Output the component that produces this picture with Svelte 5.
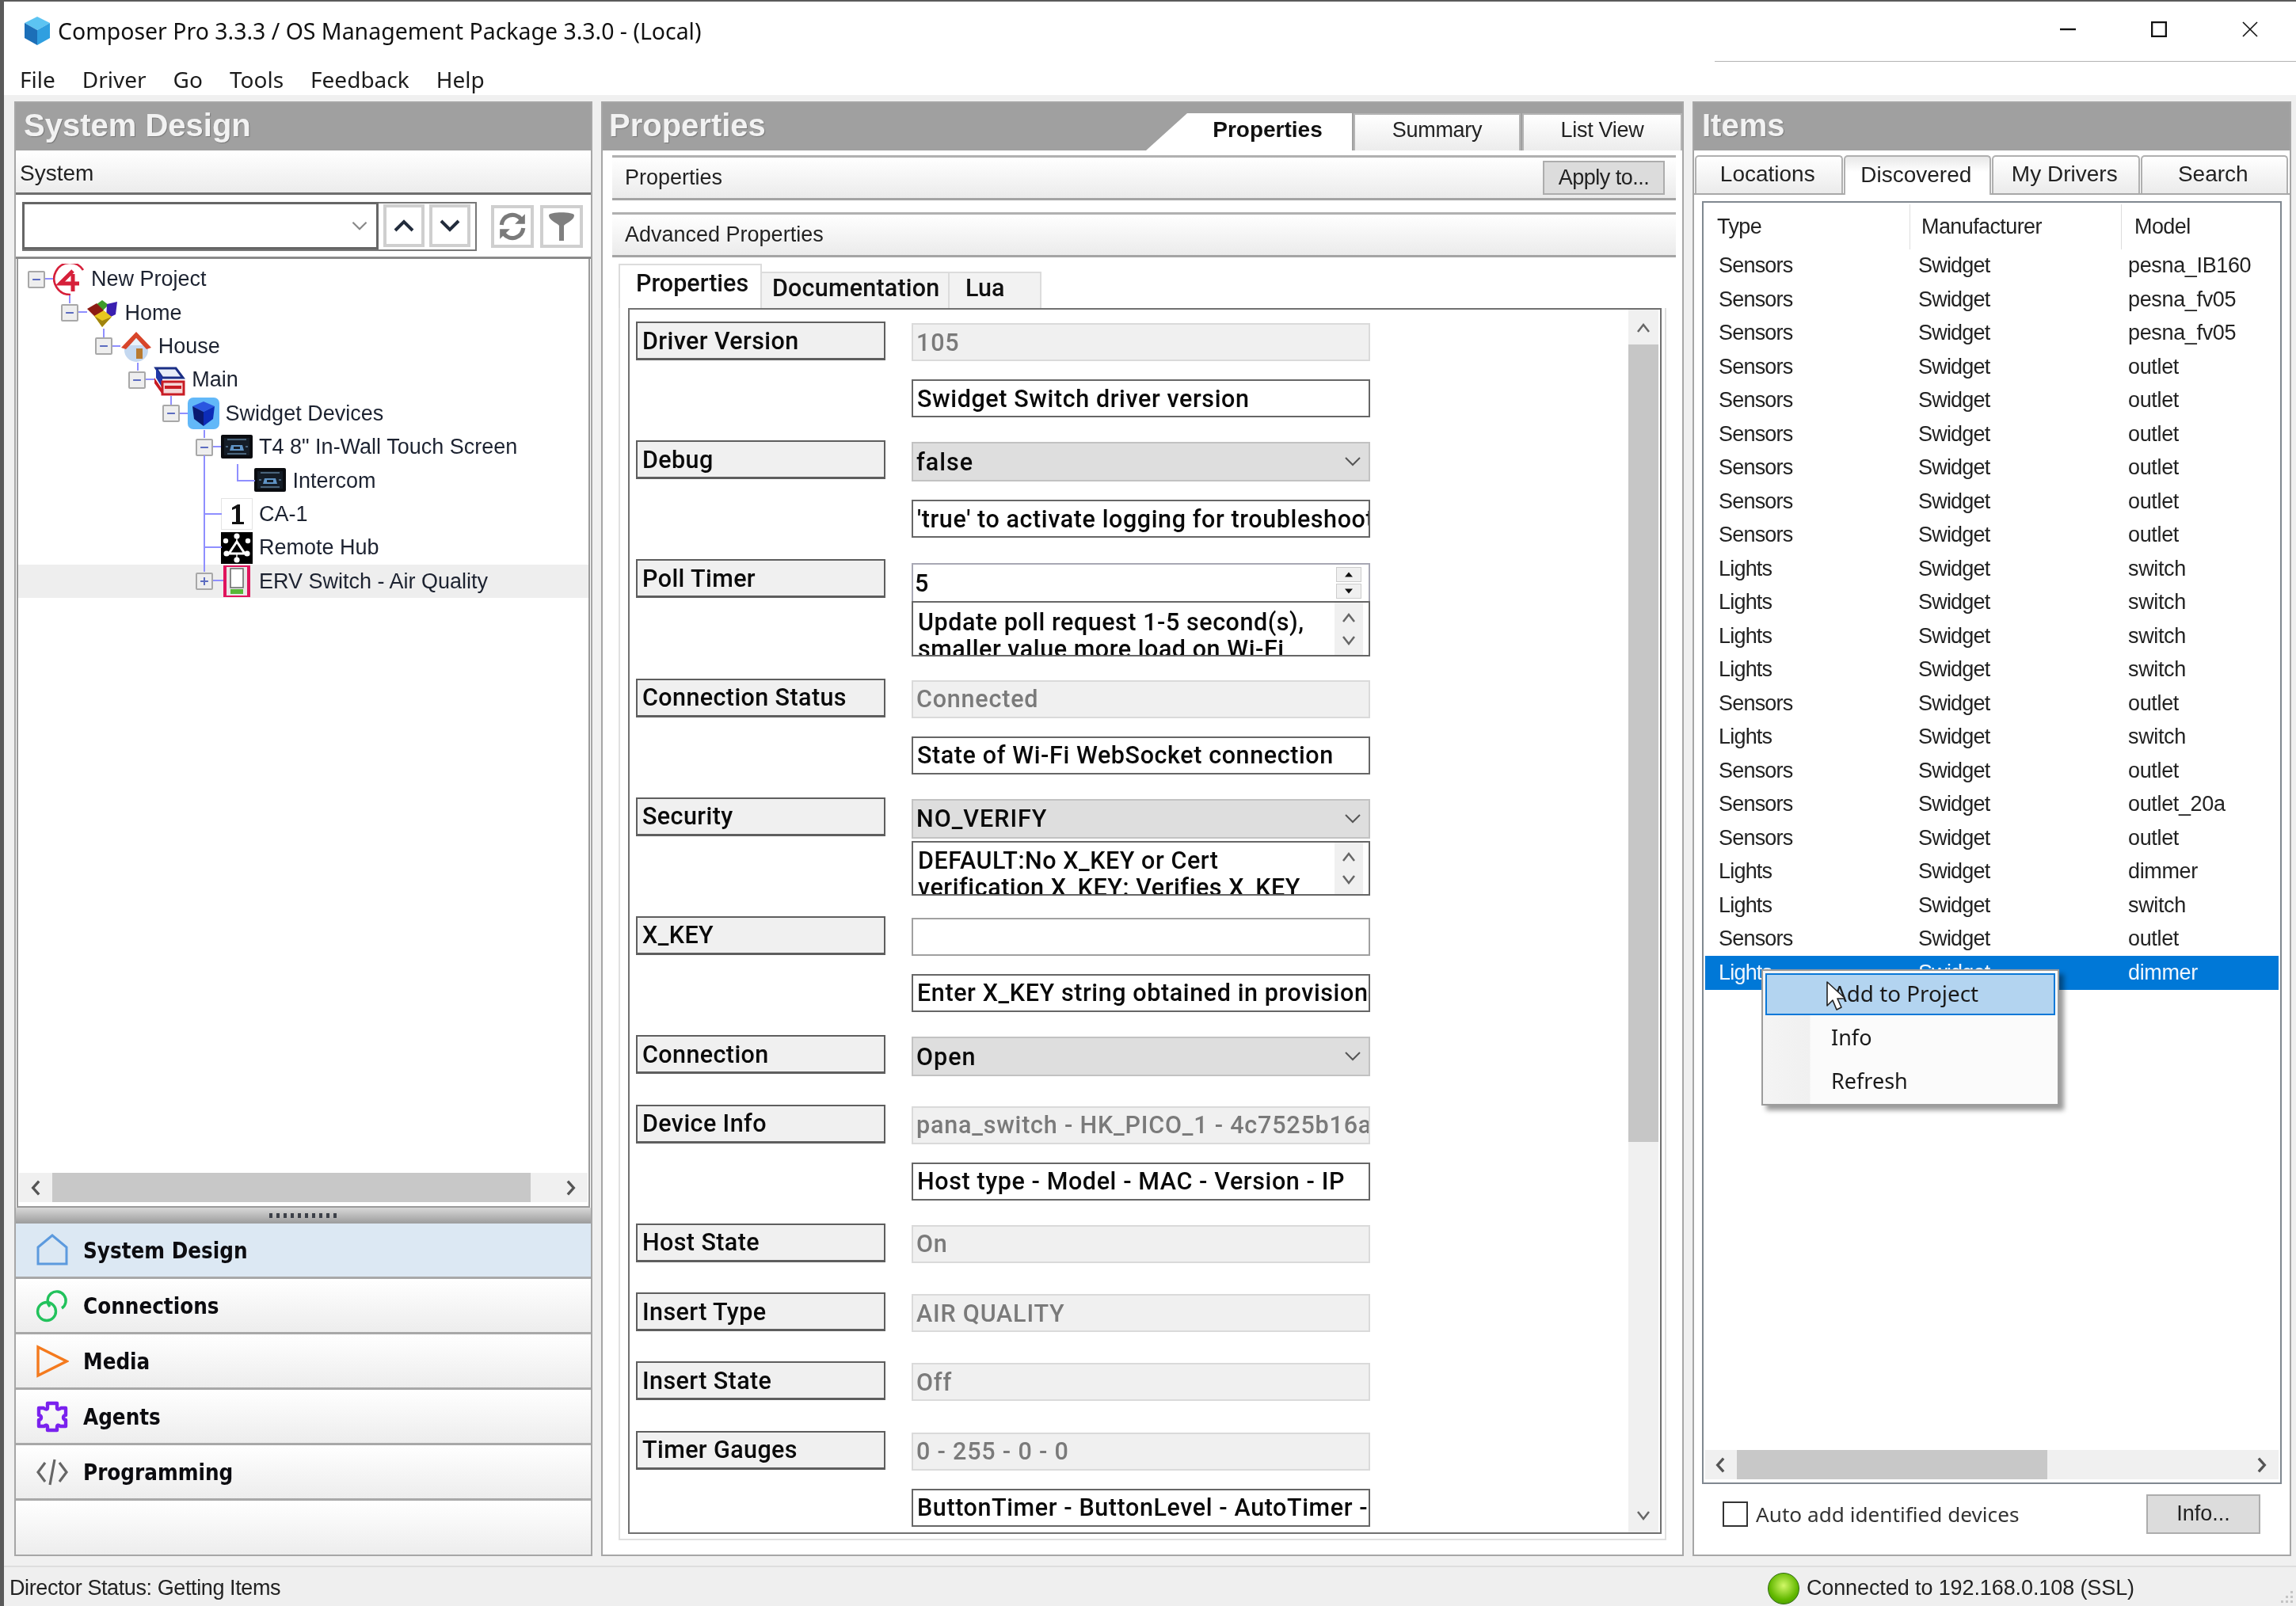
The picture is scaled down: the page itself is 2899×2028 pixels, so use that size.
<script lang="ts">
	const treeRows = [
		{ label: 'New Project', level: 0, box: '-', icon: 'c4' },
		{ label: 'Home', level: 1, box: '-', icon: 'home' },
		{ label: 'House', level: 2, box: '-', icon: 'house' },
		{ label: 'Main', level: 3, box: '-', icon: 'room' },
		{ label: 'Swidget Devices', level: 4, box: '-', icon: 'swidget' },
		{ label: 'T4 8" In-Wall Touch Screen', level: 5, box: '-', icon: 't4' },
		{ label: 'Intercom', level: 6, box: '', icon: 't4' },
		{ label: 'CA-1', level: 5, box: '', icon: 'ca1' },
		{ label: 'Remote Hub', level: 5, box: '', icon: 'hub' },
		{ label: 'ERV Switch - Air Quality', level: 5, box: '+', icon: 'erv', hover: true }
	];

	const treeLines = [
		'M57 25H67',
		'M88 46V56M99 67H110',
		'M131 88V99M142 110H152',
		'M174 131V141M184 152H195',
		'M216 173V184M227 195H237',
		'M258 216V226M269 237H279',
		'M300 259V280H322',
		'M258 248V395M258 322H280M258 364H280M269 406H282'
	];

	const fields = [
		{ label: 'Driver Version', kind: 'off', value: '105', desc: 'Swidget Switch driver version' },
		{ label: 'Debug', kind: 'select', value: 'false', desc: "'true' to activate logging for troubleshooting" },
		{ label: 'Poll Timer', kind: 'spin', value: '5', memo: ['Update poll request  1-5 second(s),', 'smaller value more load on Wi-Fi'] },
		{ label: 'Connection Status', kind: 'off', value: 'Connected', desc: 'State of Wi-Fi WebSocket connection' },
		{ label: 'Security', kind: 'select', value: 'NO_VERIFY', memo: ['DEFAULT:No X_KEY or Cert', 'verification  X_KEY: Verifies X_KEY'] },
		{ label: 'X_KEY', kind: 'text', value: '', desc: 'Enter X_KEY string obtained in provisioning' },
		{ label: 'Connection', kind: 'select', value: 'Open' },
		{ label: 'Device Info', kind: 'off', value: 'pana_switch - HK_PICO_1 - 4c7525b16a', desc: 'Host type - Model - MAC - Version - IP' },
		{ label: 'Host State', kind: 'off', value: 'On' },
		{ label: 'Insert Type', kind: 'off', value: 'AIR QUALITY' },
		{ label: 'Insert State', kind: 'off', value: 'Off' },
		{ label: 'Timer Gauges', kind: 'off', value: '0 - 255 - 0 - 0', desc: 'ButtonTimer - ButtonLevel - AutoTimer - AutoLevel' }
	];

	const items = [
		['Sensors', 'pesna_IB160'],
		['Sensors', 'pesna_fv05'],
		['Sensors', 'pesna_fv05'],
		['Sensors', 'outlet'],
		['Sensors', 'outlet'],
		['Sensors', 'outlet'],
		['Sensors', 'outlet'],
		['Sensors', 'outlet'],
		['Sensors', 'outlet'],
		['Lights', 'switch'],
		['Lights', 'switch'],
		['Lights', 'switch'],
		['Lights', 'switch'],
		['Sensors', 'outlet'],
		['Lights', 'switch'],
		['Sensors', 'outlet'],
		['Sensors', 'outlet_20a'],
		['Sensors', 'outlet'],
		['Lights', 'dimmer'],
		['Lights', 'switch'],
		['Sensors', 'outlet'],
		['Lights', 'dimmer']
	];

	const navItems = ['System Design', 'Connections', 'Media', 'Agents', 'Programming'];
</script>

<div class="window">
	<header class="titlebar">
		<svg class="app-icon" viewBox="0 0 34 38">
			<path d="M17 1 33 9 17 18 1 9Z" fill="#5cc4f2" />
			<path d="M1 9 17 18V37L1 28Z" fill="#1c6fb8" />
			<path d="M33 9 17 18V37L33 28Z" fill="#2f9fe0" />
		</svg>
		<span class="title">Composer Pro 3.3.3 / OS Management Package 3.3.0 - (Local)</span>
		<div class="win-controls">
			<svg viewBox="0 0 20 20"><path d="M0 10H20" stroke-width="2.4" /></svg>
			<svg viewBox="0 0 20 20"><path d="M1 1H19V19H1Z" stroke-width="2.6" /></svg>
			<svg viewBox="0 0 20 20"><path d="M1 1 19 19M19 1 1 19" stroke-width="1.6" /></svg>
		</div>
	</header>

	<nav class="menubar">
		<span>File</span><span>Driver</span><span>Go</span><span>Tools</span><span>Feedback</span><span>Help</span>
	</nav>

	<main class="main">
		<section class="panel left">
			<h2 class="panel-head">System Design</h2>
			<div class="sys-bar">System</div>
			<div class="sys-tools">
				<div class="combo-group">
					<div class="combo">
						<svg viewBox="0 0 24 14"><path d="M2 2 12 12 22 2" /></svg>
					</div>
					<button class="tool-btn" aria-label="Up">
						<svg viewBox="0 0 26 16"><path d="M2 14 13 3 24 14" /></svg>
					</button>
					<button class="tool-btn" aria-label="Down">
						<svg viewBox="0 0 26 16"><path d="M2 2 13 13 24 2" /></svg>
					</button>
				</div>
				<button class="tool-btn solo" aria-label="Refresh">
					<svg class="refresh" viewBox="0 0 36 36">
						<path d="M5 16A13 13 0 0 1 28 9" />
						<path d="M31 20A13 13 0 0 1 8 27" />
						<path class="solid" d="M33 3V15H21ZM3 33V21H15Z" />
					</svg>
				</button>
				<button class="tool-btn solo" aria-label="Filter">
					<svg class="funnel" viewBox="0 0 36 38">
						<path d="M2 5C2 0 34 0 34 5 34 11 23 15 21 18V37H15V18C13 15 2 11 2 5Z" />
					</svg>
				</button>
			</div>
			<div class="tree">
				<div class="tree-rows">
					{#each treeRows as row}
						<div class="tree-row" class:hover={row.hover} style="padding-left: {12 + row.level * 42.4}px">
							<span class="expander">
								{#if row.box}
									<i class="expander-box">
										<svg viewBox="0 0 22 22">
											<path d={row.box === '+' ? 'M5 11H17M11 5V17' : 'M5 11H17'} />
										</svg>
									</i>
								{/if}
							</span>
							<svg class="node-icon" viewBox="0 0 40 40">
								{#if row.icon === 'c4'}
									<path d="M38 8A20 20 0 1 0 22 39" fill="none" stroke="#d6203a" stroke-width="2.6" />
									<path d="M25 9 9 25H33M25 13V35" fill="none" stroke="#d6203a" stroke-width="5" />
								{:else if row.icon === 'home'}
									<path d="M12 10 20 4 28 10 20 18Z" fill="#3e9c2a" />
									<path d="M26 9 39 6 37 22 25 28Z" fill="#3a1fb0" />
									<path d="M1 15 13 8 22 17 12 26Z" fill="#8c1c14" />
									<path d="M10 24 22 17 32 25 20 38Z" fill="#e8c820" />
									<path d="M10 24 20 30 32 25 20 38Z" fill="#a08410" />
								{:else if row.icon === 'house'}
									<circle cx="20" cy="25" r="15" fill="#c4d8f0" />
									<path d="M1 22 20 2 39 22 33 24 20 10 7 24Z" fill="#d8452a" />
									<path d="M12 19 20 10 28 19Z" fill="#eaf2fb" />
									<path d="M20 23H28V36H20Z" fill="#b87a30" />
								{:else if row.icon === 'room'}
									<path d="M3 5H28L37 17H11Z" fill="#e8eef8" stroke="#1b2f86" stroke-width="3" />
									<path d="M3 5V17L11 30V17" fill="#2038a8" />
									<path d="M11 22H38V38H11Z" fill="#f4d8d8" stroke="#c81c24" stroke-width="3" />
									<path d="M1 17 11 32V38L1 24Z" fill="#c81c24" />
									<path d="M14 27H35V31H14Z" fill="#c81c24" />
								{:else if row.icon === 'swidget'}
									<rect width="40" height="40" rx="7" fill="#62b8f8" />
									<path d="M20 5 34 11 20 18 6 11Z" fill="#2a56e0" />
									<path d="M6 11 20 18V36L8 27Z" fill="#0a1a70" />
									<path d="M34 11 20 18V36L32 27Z" fill="#0c2cb8" />
								{:else if row.icon === 't4'}
									<rect y="4" width="40" height="30" rx="2" fill="#0a0c10" />
									<rect x="4" y="8" width="32" height="22" fill="#141c26" />
									<path d="M13 17H27L29 24H11Z" fill="#5f93c4" />
									<path d="M16 19H24V22H16Z" fill="#141c26" />
									<path d="M6 19H9M31 19H34M8 10H32M8 28H32" stroke="#5c7c98" stroke-width="1.5" />
								{:else if row.icon === 'ca1'}
									<rect x=".5" y=".5" width="39" height="39" fill="#fff" stroke="#e4e4e4" />
									<path d="M14 12 21 8H24V30H29V33H14V30H19V13L14 15Z" fill="#111" />
								{:else if row.icon === 'hub'}
									<rect width="40" height="40" fill="#000" />
									<path d="M20 12 10 27H30Z" fill="none" stroke="#fff" stroke-width="3" />
									<path d="M20 4V12M7 26 10 27M33 26 30 27M20 34V27" stroke="#fff" stroke-width="1.4" />
									<circle cx="20" cy="5" r="3.6" fill="#fff" />
									<circle cx="6" cy="11" r="3.2" fill="#fff" />
									<circle cx="34" cy="11" r="3.2" fill="#fff" />
									<circle cx="7" cy="27" r="3.6" fill="#fff" />
									<circle cx="33" cy="27" r="3.6" fill="#fff" />
									<circle cx="20" cy="35" r="3.6" fill="#fff" />
								{:else}
									<rect x="3" y="0" width="34" height="40" fill="#e0145c" />
									<rect x="7" y="2" width="26" height="36" fill="#e8e8e8" />
									<rect x="12" y="4" width="16" height="24" fill="#fff" stroke="#666" stroke-width="1.5" />
									<rect x="12" y="30" width="16" height="6" fill="#58b838" />
								{/if}
							</svg>
							<span class="node-label">{row.label}</span>
						</div>
					{/each}
				</div>
				<div class="hscroll left-scroll">
					<svg viewBox="0 0 14 24"><path d="M12 2 3 12 12 22" /></svg>
					<div class="hscroll-track"><div class="hscroll-thumb"></div></div>
					<svg viewBox="0 0 14 24"><path d="M2 2 11 12 2 22" /></svg>
				</div>
				<svg class="tree-lines" viewBox="0 0 740 500" aria-hidden="true">
					{#each treeLines as d}
						<path {d} />
					{/each}
				</svg>
			</div>
			<div class="splitter"><span></span></div>
			<div class="nav-list">
				{#each navItems as name, i}
					<div class="nav-item" class:active={i === 0}>
						<svg class="nav-icon" viewBox="0 0 42 42">
							{#if i === 0}
								<path d="M3 17 21 2 39 17V38H3Z" fill="none" stroke="#5c9ade" stroke-width="3" />
							{:else if i === 1}
								<circle cx="14" cy="28" r="11.5" fill="none" stroke="#22c25c" stroke-width="3.4" />
								<path d="M18 22A11.5 11.5 0 1 1 33 24" fill="none" stroke="#22c25c" stroke-width="3.4" />
							{:else if i === 2}
								<path d="M3 3 39 21 3 39Z" fill="none" stroke="#f47a1e" stroke-width="3.4" />
							{:else if i === 3}
								<path d="M15 4H27V10C27 12 30 12 32 10H38V19C34 19 34 25 38 25V33H31C29 31 27 31 27 34V38H15V34C15 31 12 31 11 33H4V25C8 25 8 19 4 19V10H10C12 12 15 12 15 10Z" fill="none" stroke="#7a22ee" stroke-width="4.4" stroke-linejoin="round" />
							{:else}
								<path d="M12 9 3 21 12 33M30 9 39 21 30 33M24 5 18 37" fill="none" stroke="#666" stroke-width="3.2" />
							{/if}
						</svg>
						<span>{name}</span>
					</div>
				{/each}
				<div class="nav-item empty"></div>
			</div>
		</section>

		<section class="panel center">
			<div class="center-head">
				<h2 class="panel-head plain">Properties</h2>
				<div class="view-tabs">
					<div class="view-tab active">Properties</div>
					<div class="view-tab">Summary</div>
					<div class="view-tab">List View</div>
				</div>
			</div>
			<div class="bar first">
				<span>Properties</span>
				<button class="apply">Apply to...</button>
			</div>
			<div class="bar">
				<span>Advanced Properties</span>
			</div>
			<div class="sub-tabs">
				<div class="sub-tab active">Properties</div>
				<div class="sub-tab doc">Documentation</div>
				<div class="sub-tab lua">Lua</div>
			</div>
			<div class="tab-body">
				<div class="prop-frame">
					<div class="prop-scroll">
						{#each fields as f}
							<div class="prop-row" class:short={!f.desc && !f.memo}>
								<div class="prop-label">{f.label}</div>
								<div class="prop-col">
									{#if f.kind === 'select'}
										<div class="ctl select">
											{f.value}
											<svg viewBox="0 0 20 12"><path d="M1 1 10 10 19 1" /></svg>
										</div>
									{:else if f.kind === 'spin'}
										<div class="ctl spin">
											{f.value}
											<div class="spin-btns">
												<i><svg viewBox="0 0 10 6"><path d="M5 0 10 6H0Z" /></svg></i>
												<i><svg viewBox="0 0 10 6"><path d="M5 6 10 0H0Z" /></svg></i>
											</div>
										</div>
									{:else}
										<div class="ctl" class:off={f.kind === 'off'}>{f.value}</div>
									{/if}
									{#if f.desc}
										<div class="ctl desc">{f.desc}</div>
									{/if}
									{#if f.memo}
										<div class="memo">
											<div class="memo-text">
												{#each f.memo as line}<div>{line}</div>{/each}
											</div>
											<div class="memo-arrows">
												<svg viewBox="0 0 18 14"><path d="M2 12 9 3 16 12" /></svg>
												<svg viewBox="0 0 18 14"><path d="M2 2 9 11 16 2" /></svg>
											</div>
										</div>
									{/if}
								</div>
							</div>
						{/each}
					</div>
					<div class="vscroll">
						<svg viewBox="0 0 18 14"><path d="M2 12 9 3 16 12" /></svg>
						<div class="vscroll-track"><div class="vscroll-thumb"></div></div>
						<svg viewBox="0 0 18 14"><path d="M2 2 9 11 16 2" /></svg>
					</div>
				</div>
			</div>
		</section>

		<section class="panel right">
			<h2 class="panel-head">Items</h2>
			<div class="item-tabs">
				<div class="item-tab">Locations</div>
				<div class="item-tab active">Discovered</div>
				<div class="item-tab">My Drivers</div>
				<div class="item-tab">Search</div>
			</div>
			<div class="list-frame">
				<div class="list-head">
					<span>Type</span>
					<span>Manufacturer</span>
					<span>Model</span>
				</div>
				<div class="list-rows">
					{#each items as item, i}
						<div class="list-row" class:selected={i === items.length - 1}>
							<span>{item[0]}</span>
							<span>Swidget</span>
							<span class="model">{item[1]}</span>
						</div>
					{/each}
				</div>
				<div class="hscroll list-scroll">
					<svg viewBox="0 0 14 24"><path d="M12 2 3 12 12 22" /></svg>
					<div class="hscroll-track"><div class="hscroll-thumb"></div></div>
					<svg viewBox="0 0 14 24"><path d="M2 2 11 12 2 22" /></svg>
				</div>
				<div class="context-menu">
					<div class="menu-item hot">Add to Project</div>
					<div class="menu-item">Info</div>
					<div class="menu-item">Refresh</div>
					<svg class="cursor" viewBox="0 0 24 38">
						<path d="M1 1V31L8 24 13 36 19 33 14 22H24Z" fill="#fff" stroke="#222" stroke-width="1.6" stroke-linejoin="round" />
					</svg>
				</div>
			</div>
			<div class="list-foot">
				<label class="auto-add"><i class="check"></i>Auto add identified devices</label>
				<button class="info-btn">Info...</button>
			</div>
		</section>
	</main>

	<footer class="statusbar">
		<span class="director">Director Status: Getting Items</span>
		<div class="connection">
			<i class="led"></i>
			<span>Connected to 192.168.0.108 (SSL)</span>
		</div>
		<svg class="grip" viewBox="0 0 20 20">
			<path d="M15 3h3v3h-3zM9 9h3v3H9zM15 9h3v3h-3zM3 15h3v3H3zM9 15h3v3H9zM15 15h3v3h-3z" />
		</svg>
	</footer>
</div>

<style>
	:global(body) {
		margin: 0;
		background: #f0f0f0;
	}

	.window {
		box-sizing: border-box;
		width: 2899px;
		height: 2028px;
		display: flex;
		flex-direction: column;
		overflow: hidden;
		background: #f0f0f0;
		border-top: 2px solid #5a5a5a;
		border-left: 5px solid #5a5a5a;
		font-family: 'Liberation Sans', Arial, sans-serif;
		color: #111;
		filter: blur(0.55px);
	}

	button {
		font-family: inherit;
		padding: 0;
	}

	svg {
		display: block;
		flex: none;
	}

	/* title + menu */
	.titlebar {
		position: relative;
		height: 74px;
		flex: none;
		display: flex;
		align-items: center;
		background: #fff;
		padding-left: 25px;
	}

	.titlebar::after {
		content: '';
		position: absolute;
		left: 2160px;
		right: 0;
		bottom: -2px;
		height: 1px;
		background: #b4b4b4;
	}

	.app-icon {
		width: 34px;
		height: 38px;
	}

	.title {
		margin-left: 9px;
		font-family: 'Noto Sans', sans-serif;
		font-size: 28.45px;
		color: #111;
	}

	.win-controls {
		margin-left: auto;
		display: flex;
		gap: 95px;
		padding-right: 48px;
		margin-bottom: 4px;
	}

	.win-controls svg {
		width: 20px;
		height: 20px;
		fill: none;
		stroke: #111;
	}

	.menubar {
		height: 44px;
		flex: none;
		display: flex;
		align-items: center;
		gap: 34px;
		padding: 4px 0 0 20px;
		box-sizing: border-box;
		background: #fff;
		font-family: 'Noto Sans', sans-serif;
		font-size: 28px;
		color: #1c1c1c;
	}

	/* panels */
	.main {
		flex: 1;
		min-height: 0;
		display: flex;
		gap: 11px;
		padding: 8px 6px 12px 13px;
	}

	.panel {
		box-sizing: border-box;
		display: flex;
		flex-direction: column;
		background: #fff;
		border: 2px solid #a6a6a6;
	}

	.panel.left {
		width: 730px;
	}

	.panel.center {
		width: 1367px;
	}

	.panel.right {
		flex: 1;
	}

	.panel-head {
		margin: 0;
		height: 60px;
		flex: none;
		display: flex;
		align-items: center;
		padding: 0 0 3px 10px;
		box-sizing: border-box;
		background: #a0a0a0;
		color: #f2f2f2;
		font-size: 40px;
		font-weight: 700;
		text-shadow: 1px 1px 1px #777;
	}

	/* system design */
	.sys-bar {
		box-sizing: border-box;
		height: 56px;
		flex: none;
		display: flex;
		align-items: center;
		padding: 4px 0 0 5px;
		font-size: 28px;
		color: #222;
		background: linear-gradient(#fff, #ececec);
		border-bottom: 3px solid #6e6e6e;
	}

	.sys-tools {
		box-sizing: border-box;
		height: 81px;
		flex: none;
		display: flex;
		align-items: center;
		gap: 8px;
		padding: 2px 0 0 8px;
		border-bottom: 3px solid #8a8a8a;
		background: #fff;
	}

	.combo-group {
		display: flex;
		align-items: center;
		gap: 6px;
		padding-right: 6px;
		margin-right: 10px;
		border: 2px solid #777;
		border-left: 0;
		border-top: 0;
		box-shadow: inset 0 2px 0 #777;
		height: 60px;
	}

	.combo {
		box-sizing: border-box;
		width: 450px;
		height: 60px;
		display: flex;
		align-items: center;
		justify-content: flex-end;
		padding-right: 10px;
		border: 3px solid #666;
		background: #fff;
	}

	.combo svg {
		width: 22px;
		height: 12px;
		fill: none;
		stroke: #888;
		stroke-width: 2.5;
	}

	.tool-btn {
		box-sizing: border-box;
		width: 52px;
		height: 54px;
		display: flex;
		align-items: center;
		justify-content: center;
		background: #fff;
		border: 4px solid #cfcfcf;
	}

	.tool-btn svg {
		width: 26px;
		height: 16px;
		fill: none;
		stroke: #222c3c;
		stroke-width: 4;
	}

	.tool-btn.solo {
		width: 54px;
	}

	.tool-btn svg.refresh {
		width: 38px;
		height: 38px;
		stroke: #7a7a7a;
		stroke-width: 5;
	}

	.refresh .solid {
		fill: #7a7a7a;
		stroke: none;
	}

	.tool-btn svg.funnel {
		width: 36px;
		height: 40px;
		fill: #7f7f7f;
		stroke: none;
	}

	.tree {
		position: relative;
		flex: 1;
		min-height: 0;
		display: flex;
		flex-direction: column;
		margin: 0 1px;
		border: 2px solid #9a9a9a;
		border-top: 0;
		background: #fff;
	}

	.tree-lines {
		position: absolute;
		left: -23px;
		top: 0;
		width: 740px;
		height: 500px;
		pointer-events: none;
	}

	.tree-lines path {
		fill: none;
		stroke: #8f8fff;
		stroke-width: 2;
	}

	.tree-rows {
		flex: 1;
		padding-top: 4.5px;
	}

	.tree-row {
		box-sizing: border-box;
		height: 42.4px;
		display: flex;
		align-items: center;
		font-size: 27px;
		color: #1c2230;
	}

	.tree-row.hover {
		background: #eeeeee;
	}

	.expander {
		width: 32px;
		flex: none;
		display: flex;
	}

	.expander-box {
		box-sizing: border-box;
		width: 22px;
		height: 22px;
		background: #eee;
		border: 2px solid #a8a8a8;
		border-radius: 2px;
	}

	.expander-box svg {
		width: 18px;
		height: 18px;
		fill: none;
		stroke: #5c6cc0;
		stroke-width: 2.4;
	}

	.node-icon {
		width: 40px;
		height: 40px;
	}

	.node-label {
		margin-left: 8px;
		white-space: nowrap;
	}

	.hscroll {
		display: flex;
		align-items: center;
		flex: none;
		height: 37px;
		background: #f0f0f0;
	}

	.hscroll > svg {
		width: 14px;
		height: 20px;
		margin: 0 14px;
		fill: none;
		stroke: #555;
		stroke-width: 4;
	}

	.hscroll-track {
		flex: 1;
		height: 100%;
	}

	.hscroll-thumb {
		height: 100%;
		background: #c8c8c8;
	}

	.left-scroll {
		margin: 0 1px 5px;
	}

	.left-scroll .hscroll-thumb {
		width: 604px;
	}

	.splitter {
		height: 20px;
		flex: none;
		display: flex;
		justify-content: center;
		padding-top: 7px;
		box-sizing: border-box;
		background: linear-gradient(#d8d8d8, #9c9c9c);
	}

	.splitter span {
		width: 86px;
		height: 6px;
		background: repeating-linear-gradient(90deg, #3c4048 0 4px, transparent 4px 9px);
	}

	.nav-item {
		box-sizing: border-box;
		height: 70px;
		display: flex;
		align-items: center;
		gap: 18px;
		padding-left: 25px;
		background: linear-gradient(#fff, #ededed);
		border-bottom: 3px solid #a8a8a8;
		font-family: 'DejaVu Sans Condensed', 'DejaVu Sans', sans-serif;
		font-size: 27.5px;
		font-weight: 700;
		color: #0c0c10;
	}

	.nav-item.active {
		background: #dce8f3;
	}

	.nav-item.empty {
		border-bottom: 0;
		height: 68px;
	}

	.nav-icon {
		width: 42px;
		height: 42px;
	}

	/* properties */
	.center-head {
		height: 60px;
		flex: none;
		display: flex;
		background: #a0a0a0;
		align-items: flex-end;
	}

	.panel-head.plain {
		background: none;
		align-self: center;
		padding-left: 8px;
	}

	.view-tabs {
		margin-left: auto;
		display: flex;
		gap: 2px;
		height: 47px;
	}

	.view-tab {
		box-sizing: border-box;
		width: 211px;
		display: flex;
		align-items: center;
		justify-content: center;
		padding-bottom: 6px;
		font-size: 27px;
		letter-spacing: -0.3px;
		color: #222;
		background: linear-gradient(#fff, #ececec);
		border: 2px solid #b4b4b4;
		border-bottom: 0;
	}

	.view-tab:last-child {
		width: 202px;
	}

	.view-tab.active {
		width: 260px;
		padding-left: 47px;
		background: #fff;
		border: 0;
		font-size: 28px;
		letter-spacing: 0;
		font-weight: 700;
		color: #111;
		clip-path: polygon(0 100%, 52px 0, 100% 0, 100% 100%);
	}

	.bar {
		box-sizing: border-box;
		height: 57px;
		flex: none;
		margin: 15px 8px 0 12px;
		display: flex;
		align-items: center;
		justify-content: space-between;
		padding: 0 14px 0 16px;
		background: linear-gradient(#fff, #ebebeb);
		border-top: 3px solid #b0b0b0;
		border-bottom: 3px solid #a4a4a4;
		font-size: 27px;
		color: #222;
	}

	.bar.first {
		margin-top: 6px;
	}

	.apply {
		box-sizing: border-box;
		width: 154px;
		height: 43px;
		background: #dcdcdc;
		border: 2px solid #adadad;
		font-size: 27px;
		letter-spacing: -0.5px;
		color: #222;
	}

	.sub-tabs {
		display: flex;
		align-items: flex-end;
		height: 56px;
		flex: none;
		margin: 8px 0 0 20px;
		font-family: Roboto, sans-serif;
		font-weight: 500;
		font-size: 30.5px;
	}

	.sub-tab {
		box-sizing: border-box;
		height: 46px;
		display: flex;
		align-items: center;
		padding: 0 0 7px 13px;
		background: #f2f2f2;
		border: 2px solid #dcdcdc;
		border-bottom: 0;
		border-left: 0;
		white-space: nowrap;
	}

	.sub-tab.doc {
		width: 237px;
		letter-spacing: 0.2px;
	}

	.sub-tab.lua {
		width: 116px;
		padding-left: 20px;
	}

	.sub-tab.active {
		height: 56px;
		width: 181px;
		background: #fff;
		border-left: 2px solid #dcdcdc;
		padding: 0 0 10px 20px;
	}

	.tab-body {
		flex: 1;
		min-height: 0;
		margin: 0 20px 18px 20px;
		padding: 0 4px 6px 10px;
		border: 2px solid #e0e0e0;
		border-top: 0;
	}

	.prop-frame {
		box-sizing: border-box;
		height: 100%;
		display: flex;
		border: 2px solid #707070;
		background: #fff;
		overflow: hidden;
	}

	.prop-scroll {
		flex: 1;
		padding: 15px 0 0 8px;
		overflow: hidden;
		font-family: Roboto, sans-serif;
		font-weight: 500;
		font-size: 30.5px;
		color: #0a0a0a;
	}

	.prop-row {
		height: 150.2px;
		display: flex;
		gap: 33px;
		align-items: flex-start;
	}

	.prop-row.short {
		height: 87.4px;
	}

	.prop-label {
		box-sizing: border-box;
		width: 315px;
		height: 49px;
		flex: none;
		display: flex;
		align-items: center;
		padding-left: 6px;
		background: #f0f0f0;
		border: 2px solid #5e5e5e;
		border-bottom-width: 3px;
		white-space: nowrap;
		letter-spacing: 0.4px;
	}

	.prop-col {
		width: 579px;
		display: flex;
		flex-direction: column;
		padding-top: 2px;
	}

	.ctl {
		box-sizing: border-box;
		height: 48px;
		display: flex;
		align-items: center;
		padding: 0 4px;
		overflow: hidden;
		white-space: nowrap;
		letter-spacing: 0.55px;
		background: #fff;
		border: 2px solid #a0a0a0;
	}

	.ctl.off {
		background: #f0f0f0;
		border-color: #dadada;
		color: #7a7a7a;
		letter-spacing: 0.8px;
	}

	.ctl.desc {
		margin-top: 23px;
		border-color: #666;
		padding: 0 5px;
		letter-spacing: 0.6px;
	}

	.ctl.select {
		justify-content: space-between;
		background: #dedede;
		border-color: #c2c2c2;
		padding-right: 10px;
		height: 50px;
		letter-spacing: 1px;
	}

	.ctl.select svg {
		width: 20px;
		height: 12px;
		fill: none;
		stroke: #555;
		stroke-width: 2;
	}

	.ctl.spin {
		justify-content: space-between;
		margin-top: 3px;
		padding: 0 9px 0 2px;
		border-color: #a8a8b4;
		border-bottom: 0;
	}

	.spin-btns {
		display: flex;
		flex-direction: column;
		gap: 2px;
	}

	.spin-btns i {
		width: 32px;
		height: 19px;
		display: flex;
		align-items: center;
		justify-content: center;
		background: #f0f0f0;
		border: 1px solid #ccc;
		box-sizing: border-box;
	}

	.spin-btns svg {
		width: 10px;
		height: 7px;
		fill: #111;
	}

	.memo {
		box-sizing: border-box;
		height: 69px;
		margin-top: 3px;
		display: flex;
		overflow: hidden;
		background: #fff;
		border: 2px solid #666;
	}

	.ctl.spin + .memo {
		margin-top: 0;
		height: 70px;
	}

	.ctl.spin + .memo .memo-text {
		padding-top: 8px;
	}

	.memo-text {
		flex: 1;
		padding: 6px 6px 0;
		line-height: 34px;
		white-space: nowrap;
		letter-spacing: 0.55px;
		overflow: hidden;
	}

	.memo-arrows {
		width: 36px;
		flex: none;
		margin-right: 7px;
		display: flex;
		flex-direction: column;
		justify-content: space-around;
		align-items: center;
		background: #f0f0f0;
		padding: 4px 0;
		box-sizing: border-box;
	}

	.memo-arrows svg,
	.vscroll > svg {
		width: 18px;
		height: 14px;
		fill: none;
		stroke: #666;
		stroke-width: 2.5;
	}

	.vscroll {
		width: 38px;
		flex: none;
		margin-right: 2px;
		display: flex;
		flex-direction: column;
		align-items: center;
		background: #f0f0f0;
	}

	.vscroll > svg {
		margin: 16px 0 14px;
	}

	.vscroll-track {
		flex: 1;
		width: 100%;
	}

	.vscroll-thumb {
		height: 1007px;
		background: #c6c6c6;
	}

	/* items */
	.item-tabs {
		display: flex;
		height: 56px;
		flex: none;
		padding: 6px 1px 0;
		box-sizing: border-box;
		border-bottom: 2px solid #a8a8a8;
	}

	.item-tab {
		flex: 1;
		display: flex;
		align-items: center;
		justify-content: center;
		box-sizing: border-box;
		padding: 0 3px 2px 0;
		font-size: 28px;
		color: #222;
		background: linear-gradient(#fff, #ebebeb);
		border: 2px solid #b0b0b0;
		border-bottom: 0;
		border-radius: 5px 5px 0 0;
		margin-right: 1px;
	}

	.item-tab.active {
		background: linear-gradient(#e8e8e8, #fff 40%);
		margin-bottom: -2px;
	}

	.list-frame {
		position: relative;
		flex: 1;
		min-height: 0;
		display: flex;
		flex-direction: column;
		margin: 8px 10px 0;
		border: 2px solid #808890;
		background: #fff;
	}

	.list-head {
		height: 58.5px;
		flex: none;
		display: grid;
		grid-template-columns: 261px 267px 1fr;
		align-items: center;
		padding: 1.5px 0 0 0;
		box-sizing: border-box;
		font-size: 27px;
		letter-spacing: -0.6px;
		color: #222;
	}

	.list-head span {
		height: 100%;
		display: flex;
		align-items: center;
		padding-left: 17px;
		border-right: 1px solid #ddd;
	}

	.list-head span:nth-child(2) {
		padding-left: 14px;
	}

	.list-head span:last-child {
		border-right: 0;
		padding-left: 16px;
	}

	.list-rows {
		flex: 1;
		min-height: 0;
		padding: 0 2px;
	}

	.list-row {
		height: 42.5px;
		display: grid;
		grid-template-columns: 252px 265px 1fr;
		align-items: center;
		padding-left: 17px;
		font-size: 27px;
		letter-spacing: -0.8px;
		color: #222;
	}

	.list-row .model {
		letter-spacing: -0.35px;
	}

	.list-row.selected {
		background: #0078d7;
		color: #f0f6fc;
	}

	.list-scroll {
		margin: 0 2px 4px;
	}

	.list-scroll .hscroll-thumb {
		width: 392px;
	}

	.list-scroll > svg {
		margin: 0 14px 0 12px;
	}

	.context-menu {
		box-sizing: border-box;
		position: absolute;
		left: 73px;
		top: 968px;
		width: 376px;
		height: 172px;
		padding: 3px;
		background: linear-gradient(90deg, #f4f4f4, #f0f0f0 59px, #fbfbfb 60px);
		border: 2px solid #9c9c9c;
		box-shadow: 6px 6px 6px rgba(0, 0, 0, 0.4);
		font-family: 'Noto Sans', sans-serif;
		font-size: 27px;
		color: #1a1a1a;
	}

	.menu-item {
		box-sizing: border-box;
		height: 55px;
		display: flex;
		align-items: center;
		padding-left: 83px;
	}

	.menu-item.hot {
		height: 53px;
		padding-bottom: 3px;
		background: #b3d4f0;
		border: 2px solid #0a78d8;
		font-size: 27.8px;
	}

	.cursor {
		position: absolute;
		left: 80px;
		top: 13px;
		width: 24px;
		height: 38px;
	}

	.list-foot {
		height: 89px;
		flex: none;
		display: flex;
		align-items: center;
		justify-content: space-between;
		padding: 0 37px 14px 36px;
		box-sizing: border-box;
	}

	.auto-add {
		display: flex;
		align-items: center;
		gap: 10px;
		font-family: 'Noto Sans', sans-serif;
		font-size: 26.2px;
		color: #333;
	}

	.check {
		box-sizing: border-box;
		width: 32px;
		height: 32px;
		border: 2px solid #333;
		background: #fff;
	}

	.info-btn {
		box-sizing: border-box;
		width: 144px;
		height: 50px;
		background: #dcdcdc;
		border: 2px solid #adadad;
		font-size: 27px;
		color: #222;
	}

	/* status */
	.statusbar {
		height: 51px;
		flex: none;
		display: flex;
		align-items: center;
		background: #efefef;
		border-top: 2px solid #dedede;
		box-sizing: border-box;
		font-size: 27px;
		letter-spacing: -0.4px;
		color: #222;
		padding: 4px 0 0 7px;
		position: relative;
	}

	.connection {
		margin-left: auto;
		margin-right: 204px;
		display: flex;
		align-items: center;
		gap: 9px;
		letter-spacing: -0.1px;
	}

	.led {
		width: 40px;
		height: 40px;
		border-radius: 50%;
		background: radial-gradient(circle at 50% 40%, #d2f868, #62b800 60%, #3b8a00);
		border: 1px solid #2f6a10;
		box-sizing: border-box;
	}

	.grip {
		position: absolute;
		right: 2px;
		bottom: 2px;
		width: 20px;
		height: 20px;
		fill: #c4c4c4;
	}
</style>
